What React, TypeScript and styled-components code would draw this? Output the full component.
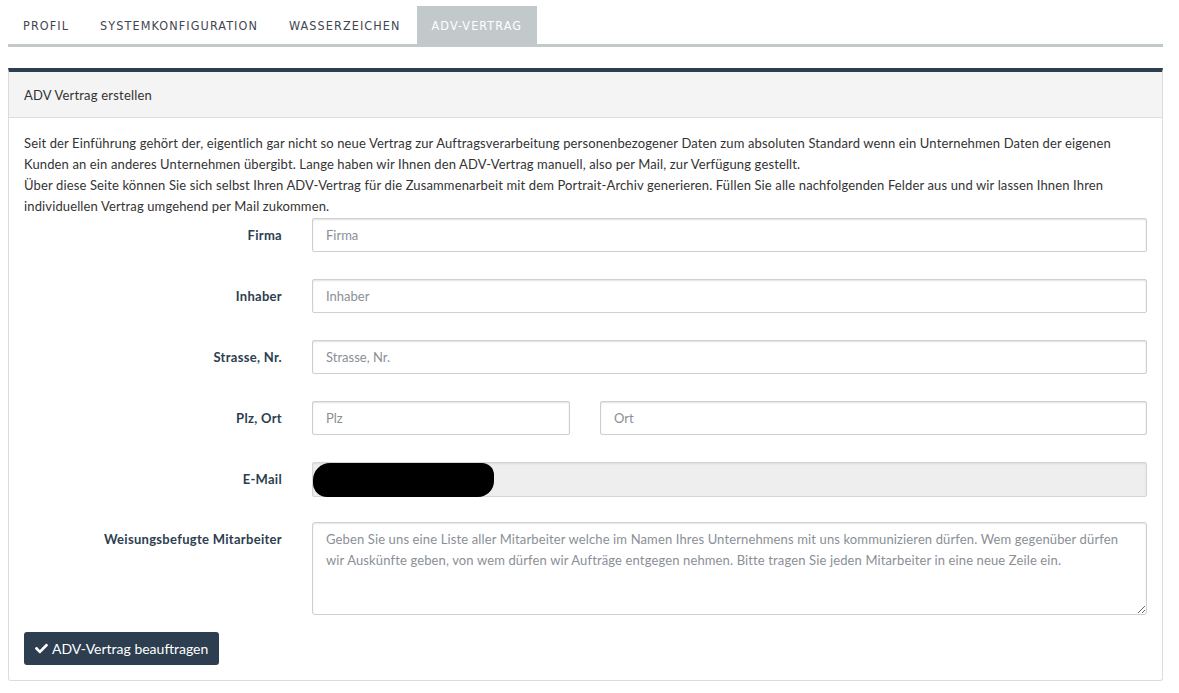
import React from "react";
import styled, { createGlobalStyle } from "styled-components";
import { FaCheck } from "react-icons/fa";

const Global = createGlobalStyle`
  html, body { margin: 0; padding: 0; background: #fff; }
  body { font-family: Lato, "Open Sans", sans-serif; font-size: 13px; color: #333; }
  * { box-sizing: border-box; }
`;

const Page = styled.div`
  padding: 6px 16px 13px 8px;
`;

const TabBar = styled.nav`
  display: flex;
  gap: 1px;
  border-bottom: 3px solid #c1c9ca;
`;

const Tab = styled.div<{ $active?: boolean }>`
  height: 38px;
  padding: 0 15px;
  display: flex;
  align-items: center;
  font-family: "Liberation Sans Narrow", "DejaVu Sans Condensed", sans-serif;
  font-size: 12.5px;
  letter-spacing: 1.1px;
  text-transform: uppercase;
  color: ${(p) => (p.$active ? "#fff" : "#3f4550")};
  background: ${(p) => (p.$active ? "#c1c9ca" : "transparent")};
`;

const Panel = styled.section`
  margin-top: 21px;
  border: 1px solid #dcdcdc;
  border-top: 4px solid #2c3e50;
  border-radius: 0 0 3px 3px;
`;

const PanelHeader = styled.div`
  background: #f4f4f4;
  border-bottom: 1px solid #dddddd;
  padding: 13px 15px 12px;
  line-height: 20px;
  font-size: 13px;
  letter-spacing: 0.2px;
  color: #333;
`;

const PanelBody = styled.div`
  padding: 15px 15px 15px;
`;

const Intro = styled.p`
  margin: 0 0 1px;
  line-height: 21px;
  letter-spacing: 0.13px;
  color: #333;
`;

const Row = styled.div<{ $cols?: string; $gap?: number }>`
  display: grid;
  grid-template-columns: ${(p) => p.$cols || "258px 1fr"};
  column-gap: 30px;
  margin-bottom: ${(p) => (p.$gap ?? 27)}px;
`;

const Label = styled.label`
  text-align: right;
  font-weight: 700;
  letter-spacing: 0.3px;
  color: #2c3e50;
  padding-top: 7px;
  line-height: 20px;
`;

const Input = styled.input`
  height: 34px;
  width: 100%;
  border: 1px solid #cfcfcf;
  border-radius: 2px;
  box-shadow: inset 0 1px 2px rgba(0, 0, 0, 0.12);
  padding: 0 13px;
  font: inherit;
  font-size: 13px;
  color: #555;
  &::placeholder { color: #8a8f96; }
`;

const DisabledField = styled.div`
  height: 35px;
  border: 1px solid #d4d4d4;
  border-radius: 2px;
  background: #eeeeee;
  box-shadow: inset 0 1px 2px rgba(0, 0, 0, 0.08);
  display: flex;
  align-items: center;
`;

const Redaction = styled.span`
  display: block;
  width: 181px;
  height: 34px;
  border-radius: 17px 12px 16px 14px;
  background: #000;
`;

const TextArea = styled.textarea`
  height: 93px;
  width: 100%;
  border: 1px solid #cfcfcf;
  border-radius: 3px;
  box-shadow: inset 0 1px 2px rgba(0, 0, 0, 0.1);
  padding: 6px 13px;
  font: inherit;
  font-size: 13px;
  line-height: 21px;
  letter-spacing: 0.13px;
  color: #555;
  resize: vertical;
  &::placeholder { color: #8a8f96; }
`;

const Button = styled.button`
  margin-top: -11px;
  height: 33px;
  padding: 0 11px;
  display: inline-flex;
  align-items: center;
  gap: 4px;
  background: #2c3e50;
  color: #fff;
  border: none;
  border-radius: 3px;
  font-family: Lato, "Open Sans", sans-serif;
  font-size: 14px;
  cursor: pointer;
`;

export default function App() {
  return (
    <>
      <Global />
      <Page>
        <TabBar>
          <Tab>Profil</Tab>
          <Tab>Systemkonfiguration</Tab>
          <Tab>Wasserzeichen</Tab>
          <Tab $active>ADV-Vertrag</Tab>
        </TabBar>
        <Panel>
          <PanelHeader>ADV Vertrag erstellen</PanelHeader>
          <PanelBody>
            <Intro>
              Seit der Einführung gehört der, eigentlich gar nicht so neue Vertrag zur Auftragsverarbeitung personenbezogener Daten zum absoluten Standard wenn ein Unternehmen Daten der eigenen Kunden an ein anderes Unternehmen übergibt. Lange haben wir Ihnen den ADV-Vertrag manuell, also per Mail, zur Verfügung gestellt.
              <br />
              Über diese Seite können Sie sich selbst Ihren ADV-Vertrag für die Zusammenarbeit mit dem Portrait-Archiv generieren. Füllen Sie alle nachfolgenden Felder aus und wir lassen Ihnen Ihren individuellen Vertrag umgehend per Mail zukommen.
            </Intro>
            <Row>
              <Label>Firma</Label>
              <Input placeholder="Firma" />
            </Row>
            <Row>
              <Label>Inhaber</Label>
              <Input placeholder="Inhaber" />
            </Row>
            <Row>
              <Label>Strasse, Nr.</Label>
              <Input placeholder="Strasse, Nr." />
            </Row>
            <Row $cols="258px 258px 1fr">
              <Label>Plz, Ort</Label>
              <Input placeholder="Plz" />
              <Input placeholder="Ort" />
            </Row>
            <Row $gap={25}>
              <Label>E-Mail</Label>
              <DisabledField>
                <Redaction />
              </DisabledField>
            </Row>
            <Row>
              <Label>Weisungsbefugte Mitarbeiter</Label>
              <TextArea placeholder="Geben Sie uns eine Liste aller Mitarbeiter welche im Namen Ihres Unternehmens mit uns kommunizieren dürfen. Wem gegenüber dürfen wir Auskünfte geben, von wem dürfen wir Aufträge entgegen nehmen. Bitte tragen Sie jeden Mitarbeiter in eine neue Zeile ein." />
            </Row>
            <Button>
              <FaCheck size={13} />
              ADV-Vertrag beauftragen
            </Button>
          </PanelBody>
        </Panel>
      </Page>
    </>
  );
}
